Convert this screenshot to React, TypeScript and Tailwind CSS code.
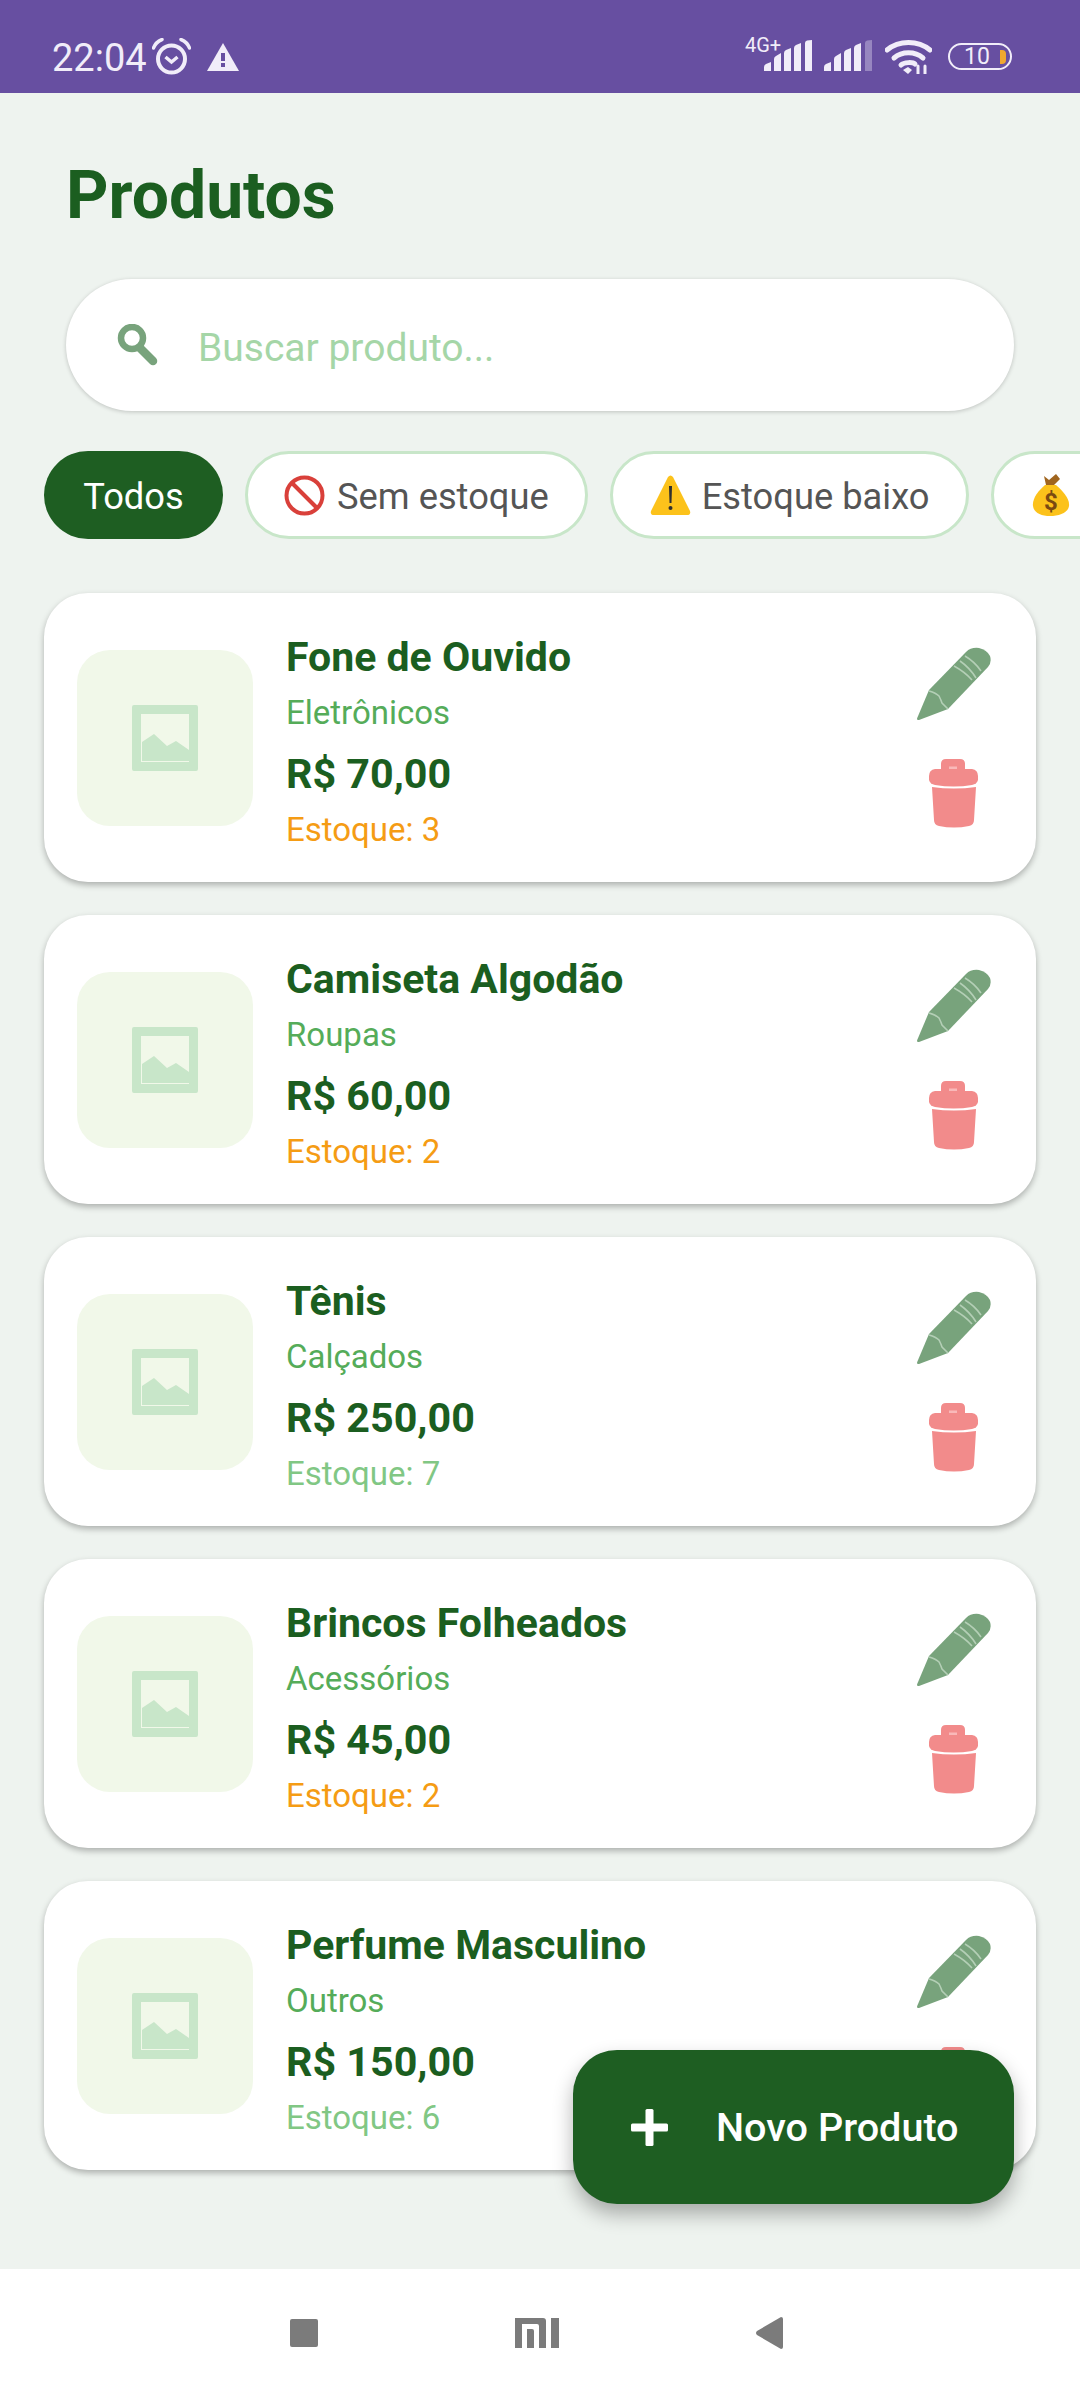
import React from 'react';

const products = [
  { name: 'Fone de Ouvido', category: 'Eletrônicos', price: 'R$ 70,00', stock: 3 },
  { name: 'Camiseta Algodão', category: 'Roupas', price: 'R$ 60,00', stock: 2 },
  { name: 'Tênis', category: 'Calçados', price: 'R$ 250,00', stock: 7 },
  { name: 'Brincos Folheados', category: 'Acessórios', price: 'R$ 45,00', stock: 2 },
  { name: 'Perfume Masculino', category: 'Outros', price: 'R$ 150,00', stock: 6 },
];

function Signal({ dim = false }: { dim?: boolean }) {
  return (
    <svg width="48" height="31" viewBox="0 0 48 31" fill="#f1edf9">
      <path d="M0 31v-4q0-2 2-3l5-2v9z" />
      <path d="M10 31V19q0-2 2-3l5-3v18z" />
      <path d="M20 31V13q0-2 2-3l5-2v23z" />
      <path d="M30 31V8q0-2 2-3l5-2v28z" />
      <path d="M41 31V3q0-2 2-2.500L48 0v31z" opacity={dim ? 0.35 : 1} />
    </svg>
  );
}

function StatusBar() {
  return (
    <div className="h-[93px] shrink-0 bg-[#674fa1] flex items-center justify-between pt-[20px] pl-[52px] pr-[68px] text-[#f1edf9]">
      <div className="flex items-center">
        <span className="text-[38px] leading-[44px] mt-[2px]">22:04</span>
        <svg className="ml-[5px]" width="39" height="37" viewBox="0 0 39 37" fill="none" stroke="#f1edf9">
          <circle cx="19.5" cy="21" r="13.5" strokeWidth="4" />
          <path d="M13.5 19l6 5 6-5" strokeWidth="3.5" />
          <path d="M1.5 10C3 6 6 3 10 1.5M37.5 10C36 6 33 3 29 1.5" strokeWidth="3.5" strokeLinecap="round" />
        </svg>
        <svg className="ml-[16px]" width="32" height="28" viewBox="0 0 32 28">
          <path d="M16 0L32 28H0z" fill="#f1edf9" />
          <rect x="14" y="10" width="4" height="8" fill="#674fa1" />
          <rect x="14" y="20" width="4" height="4" fill="#674fa1" />
        </svg>
      </div>
      <div className="flex items-center">
        <div className="relative w-[67px] h-[31px] mt-[-2px]">
          <span className="absolute left-0 top-[-5px] text-[20px] leading-[20px]">4G+</span>
          <div className="absolute right-0 top-0">
            <Signal />
          </div>
        </div>
        <div className="ml-[12px] mt-[-2px]">
          <Signal dim />
        </div>
        <svg className="ml-[13px]" width="47" height="34" viewBox="0 0 47 34" fill="none" stroke="#f1edf9" strokeWidth="5" strokeLinecap="round">
          <path d="M2 10C14 0 33 0 45 10" />
          <path d="M9 18C17 11 30 11 38 18" />
          <path d="M16 25C19 22 28 22 30 24" />
          <path d="M18 30l5 4 4-4-4-3z" fill="#f1edf9" stroke="none" />
          <path d="M33 26v8M40 26v8" strokeWidth="3" />
        </svg>
        <div className="ml-[16px] w-[64px] h-[27px] rounded-[14px] border-[2.5px] border-[#f1edf9] flex items-center pl-[14px]">
          <span className="text-[23px] leading-[23px]">10</span>
          <span className="ml-[10px] w-[6px] h-[14px] rounded-r-[4px] bg-[#f0a830]" />
        </div>
      </div>
    </div>
  );
}

function ProductImage() {
  return (
    <div className="w-[176px] h-[176px] shrink-0 rounded-[33px] bg-[#f1f8e9] flex items-center justify-center">
      <svg width="66" height="66" viewBox="0 0 66 66" fill="#c8e6c9">
        <path fillRule="evenodd" d="M2 0h62q2 0 2 2v62q0 2-2 2H2q-2 0-2-2V2q0-2 2-2zM9 9v48h48V9z" />
        <path d="M10 37l12-8 13 12 9-5 13 9v11H10z" />
      </svg>
    </div>
  );
}

function EditIcon() {
  return (
    <svg width="74" height="74" viewBox="0 0 74 74">
      <path
        d="M1 73q-1 0-1-1.500L12 43 49 5q5-5 13-4 8 2 11 8 2 6-2 11L31 62 2 73z"
        fill="#78a37c"
      />
      <path
        d="M12 44q7 2 10 5 2 4 3 7l6 6M37 19q11 6 18 14M43 14q10 7 16 17M48 9q10 6 16 15"
        fill="none"
        stroke="#b4cfb6"
        strokeWidth="1.600"
      />
    </svg>
  );
}

function DeleteIcon() {
  return (
    <svg width="50" height="69" viewBox="0 0 50 69" fill="#f28b8b">
      <path d="M12 10V5q0-5 5-5h14q5 0 5 5v5z" />
      <path d="M6 10h37q6 1 6 7v4q-1 4-6 5-18 3-37 0-5-1-6-5v-4q0-6 6-7z" />
      <path d="M3 28q22 3 44 0l-2 33q0 5-5 6-15 3-30 0-5-1-5-6z" />
      <rect x="20" y="7.500" width="8" height="2.500" fill="#f9b9b9" />
    </svg>
  );
}

function ProductCard({ product }: { product: (typeof products)[number] }) {
  return (
    <div className="h-[289px] shrink-0 rounded-[44px] bg-white shadow-[0_3px_6px_rgba(0,0,0,0.28)] flex items-center pl-[33px] pr-[45px]">
      <ProductImage />
      <div className="ml-[33px] flex-1 flex flex-col mt-[4px]">
        <span className="text-[41px] leading-[58px] font-bold text-[#1b5e20]">{product.name}</span>
        <span className="mt-[5px] text-[33px] leading-[44px] text-[#55ac59]">{product.category}</span>
        <span className="mt-[13px] text-[41.250px] leading-[52px] font-bold text-[#1b5e20]">{product.price}</span>
        <span className={`mt-[8px] text-[33px] leading-[44px] ${product.stock <= 3 ? 'text-[#f59c14]' : 'text-[#81c784]'}`}>
          Estoque: {product.stock}
        </span>
      </div>
      <div className="w-[74px] flex flex-col items-center gap-[38px]">
        <EditIcon />
        <DeleteIcon />
      </div>
    </div>
  );
}

export default function App() {
  return (
    <div className="relative w-full h-screen overflow-hidden flex flex-col bg-[#eef3ef] font-['Roboto',sans-serif]">
      <StatusBar />

      <main className="flex-1 flex flex-col min-h-0">
        <h1 className="ml-[66px] mt-[63px] text-[66px] leading-[80px] font-bold text-[#1b5e20]">Produtos</h1>

        <div className="mt-[43px] mx-[66px] h-[132px] rounded-[66px] bg-white shadow-[0_1px_4px_rgba(0,0,0,0.2)] flex items-center pl-[50px]">
          <svg width="42" height="42" viewBox="0 0 42 42" fill="none" stroke="#78a37c">
            <circle cx="16" cy="14" r="11" strokeWidth="6.500" />
            <path d="M24 24l13 13" strokeWidth="8.500" strokeLinecap="round" />
          </svg>
          <span className="ml-[40px] mt-[5px] text-[39px] leading-[48px] text-[#a5d6a7]">Buscar produto...</span>
        </div>

        <div className="mt-[40px] pl-[44px] flex gap-[22px] overflow-hidden">
          <div className="h-[88px] shrink-0 rounded-[44px] bg-[#1e5e22] w-[179px] flex items-center justify-center pt-[5px] text-[36.300px] text-white">Todos</div>
          <div className="h-[88px] shrink-0 rounded-[44px] bg-white border-[3px] border-[#c8e6c9] pl-[36px] pr-[36px] flex items-center text-[36.300px] text-[#555555]">
            <svg width="41" height="41" viewBox="0 0 41 41" fill="none" stroke="#d9403a" strokeWidth="4">
              <circle cx="20.500" cy="20.500" r="18" />
              <path d="M8 8l25 25" />
            </svg>
            <span className="ml-[12px] mt-[5px]">Sem estoque</span>
          </div>
          <div className="h-[88px] shrink-0 rounded-[44px] bg-white border-[3px] border-[#c8e6c9] pl-[37px] pr-[36px] flex items-center text-[36.300px] text-[#555555]">
            <svg width="41" height="40" viewBox="0 0 41 40">
              <path d="M18 2q2.500-3 5 0l17 34q1 4-3 4H4q-4 0-3-4z" fill="#fcc21b" />
              <path d="M19 11h3l-.5 17h-2z" fill="#2f2f2f" />
              <circle cx="20.500" cy="33" r="2" fill="#2f2f2f" />
            </svg>
            <span className="ml-[11px] mt-[5px]">Estoque baixo</span>
          </div>
          <div className="w-[200px] h-[88px] shrink-0 rounded-[44px] bg-white border-[3px] border-[#c8e6c9] pl-[38px] flex items-center">
            <svg width="38" height="42" viewBox="0 0 38 42">
              <path d="M13 11C6 17 0 25 1 32c1 7 8 10 17 10s18-3 19-10c1-7-6-15-13-21z" fill="#fcc21b" />
              <path d="M12 2l5 4 7-6 4 5-6 6H14z" fill="#a0651f" />
              <text x="19" y="36" textAnchor="middle" fontSize="24" fontWeight="700" fill="#7a4a12" fontFamily="Roboto, sans-serif">$</text>
            </svg>
          </div>
        </div>

        <div className="mt-[54px] mx-[44px] flex flex-col gap-[33px]">
          {products.map(product => (
            <ProductCard key={product.name} product={product} />
          ))}
        </div>
      </main>

      <button
        type="button"
        className="absolute left-[573px] top-[2050px] w-[441px] h-[154px] rounded-[44px] bg-[#1e5e22] shadow-[0_10px_20px_rgba(0,0,0,0.3)] flex items-center pl-[58px] text-white"
      >
        <svg width="37" height="37" viewBox="0 0 37 37" fill="#ffffff">
          <rect x="14.500" y="0" width="8" height="37" rx="1.500" />
          <rect x="0" y="14.500" width="37" height="8" rx="1.500" />
        </svg>
        <span className="ml-[48px] mt-[2px] text-[39.600px] font-medium">Novo Produto</span>
      </button>

      <nav className="relative h-[131px] shrink-0 bg-white flex items-center justify-between pl-[290px] pr-[297px] pb-[4px]">
        <div className="w-[28px] h-[28px] rounded-[2px] bg-[#7b7b7b]" />
        <svg width="44" height="30" viewBox="0 0 44 30" fill="#7b7b7b">
          <path d="M0 0h28q3 0 3 3v27h-7V8q0-2-2-2H7v24H0z" />
          <path d="M12 11h5q2 0 2 2v17h-7z" />
          <rect x="36" y="0" width="8" height="30" />
        </svg>
        <svg width="27" height="32" viewBox="0 0 27 32" fill="#7b7b7b">
          <path d="M25 0q2 0 2 2v28q0 2-2 2L1 18q-2-2 0-4z" />
        </svg>
      </nav>
    </div>
  );
}
